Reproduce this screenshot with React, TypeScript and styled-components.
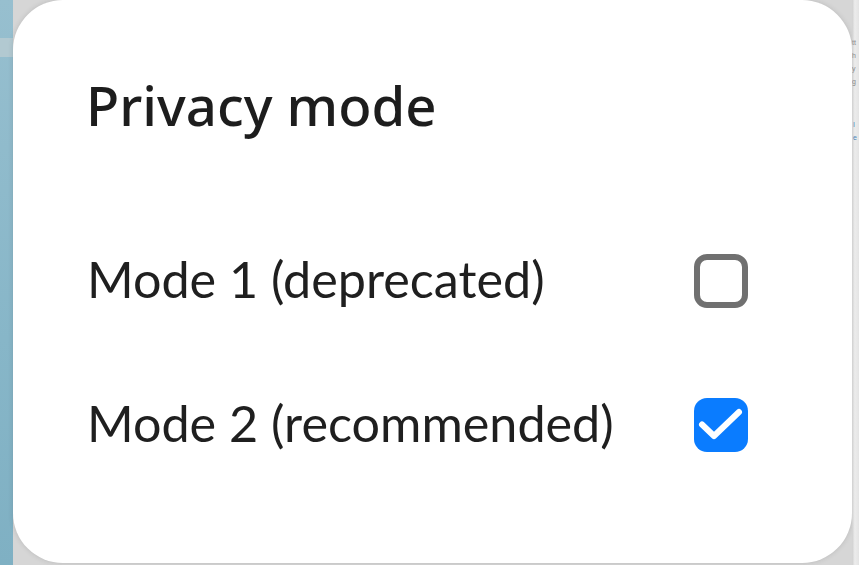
import React from "react";
import styled, { createGlobalStyle } from "styled-components";

const Global = createGlobalStyle`
  html, body { margin: 0; padding: 0; }
  body { width: 859px; height: 565px; overflow: hidden; font-family: Lato, "Noto Sans", sans-serif; }
`;

const Screen = styled.div`
  width: 859px;
  height: 565px;
  display: flex;
  overflow: hidden;
  background: #d6d6d6;
`;

const LeftBackdrop = styled.div`
  width: 13px;
  flex: none;
  display: flex;
  flex-direction: column;
  background: linear-gradient(180deg, #97bfcf 0%, #87b6c8 60%, #7fb0c3 100%);
`;

const BackdropBand = styled.div<{ $h: number; $c: string }>`
  height: ${(p) => p.$h}px;
  flex: none;
  background: ${(p) => p.$c};
`;

const RightBackdrop = styled.div`
  width: 7px;
  flex: none;
  display: flex;
  flex-direction: column;
  gap: 4px;
  padding-top: 38px;
  background: linear-gradient(90deg, #cfcfcf 0%, #ececec 40%, #e4e4e4 100%);
  overflow: hidden;
`;

const Fragment = styled.span<{ $blue?: boolean }>`
  font-family: "Liberation Sans", sans-serif;
  font-size: 7px;
  line-height: 9px;
  color: ${(p) => (p.$blue ? "#4d86b8" : "#8a8a8a")};
  white-space: nowrap;
  margin-left: ${(p) => (p.$blue ? "1px" : "0")};
`;

const Card = styled.div`
  flex: 1;
  height: 563px;
  background: #ffffff;
  border-radius: 50px;
  box-shadow: 0 0 5px rgba(60, 60, 60, 0.18);
  box-sizing: border-box;
  padding: 67px 104px 0 73px;
  display: flex;
  flex-direction: column;
`;

const Title = styled.h1`
  margin: 0;
  font-family: "Noto Sans", Lato, sans-serif;
  font-weight: 500;
  font-size: 54.5px;
  line-height: 76px;
  color: #1d1d1d;
  letter-spacing: 0px;
`;

const List = styled.div`
  margin-top: 111px;
  display: flex;
  flex-direction: column;
  gap: 90px;
`;

const Row = styled.label`
  display: flex;
  align-items: center;
  justify-content: space-between;
  height: 54px;
`;

const RowText = styled.span`
  font-family: Lato, "Noto Sans", sans-serif;
  font-weight: 400;
  font-size: 50.3px;
  color: #1f1f1f;
  padding-left: 1px;
  padding-bottom: 6px;
`;

const Box = styled.span<{ $checked: boolean }>`
  width: 54px;
  height: 54px;
  box-sizing: border-box;
  border-radius: 13px;
  display: flex;
  align-items: center;
  justify-content: center;
  border: ${(p) => (p.$checked ? "none" : "6px solid #707070")};
  background: ${(p) => (p.$checked ? "#0a7cff" : "#ffffff")};
`;

const Check = () => (
  <svg width="54" height="54" viewBox="0 0 54 54" fill="none">
    <path d="M8 26.5 L20 38 L45 14" stroke="#fff" strokeWidth="6" strokeLinecap="round" strokeLinejoin="round" />
  </svg>
);

const options = [
  { label: "Mode 1 (deprecated)", checked: false },
  { label: "Mode 2 (recommended)", checked: true },
];

export default function App() {
  return (
    <>
      <Global />
      <Screen>
        <LeftBackdrop>
          <BackdropBand $h={38} $c="transparent" />
          <BackdropBand $h={19} $c="#b2c9d1" />
        </LeftBackdrop>
        <Card>
          <Title>Privacy mode</Title>
          <List>
            {options.map((o) => (
              <Row key={o.label}>
                <RowText>{o.label}</RowText>
                <Box $checked={o.checked}>{o.checked && <Check />}</Box>
              </Row>
            ))}
          </List>
        </Card>
        <RightBackdrop>
          <Fragment>tt</Fragment>
          <Fragment>h</Fragment>
          <Fragment>y</Fragment>
          <Fragment>g</Fragment>
          <Fragment $blue style={{ marginTop: 30 }}>I</Fragment>
          <Fragment $blue>e</Fragment>
        </RightBackdrop>
      </Screen>
    </>
  );
}
